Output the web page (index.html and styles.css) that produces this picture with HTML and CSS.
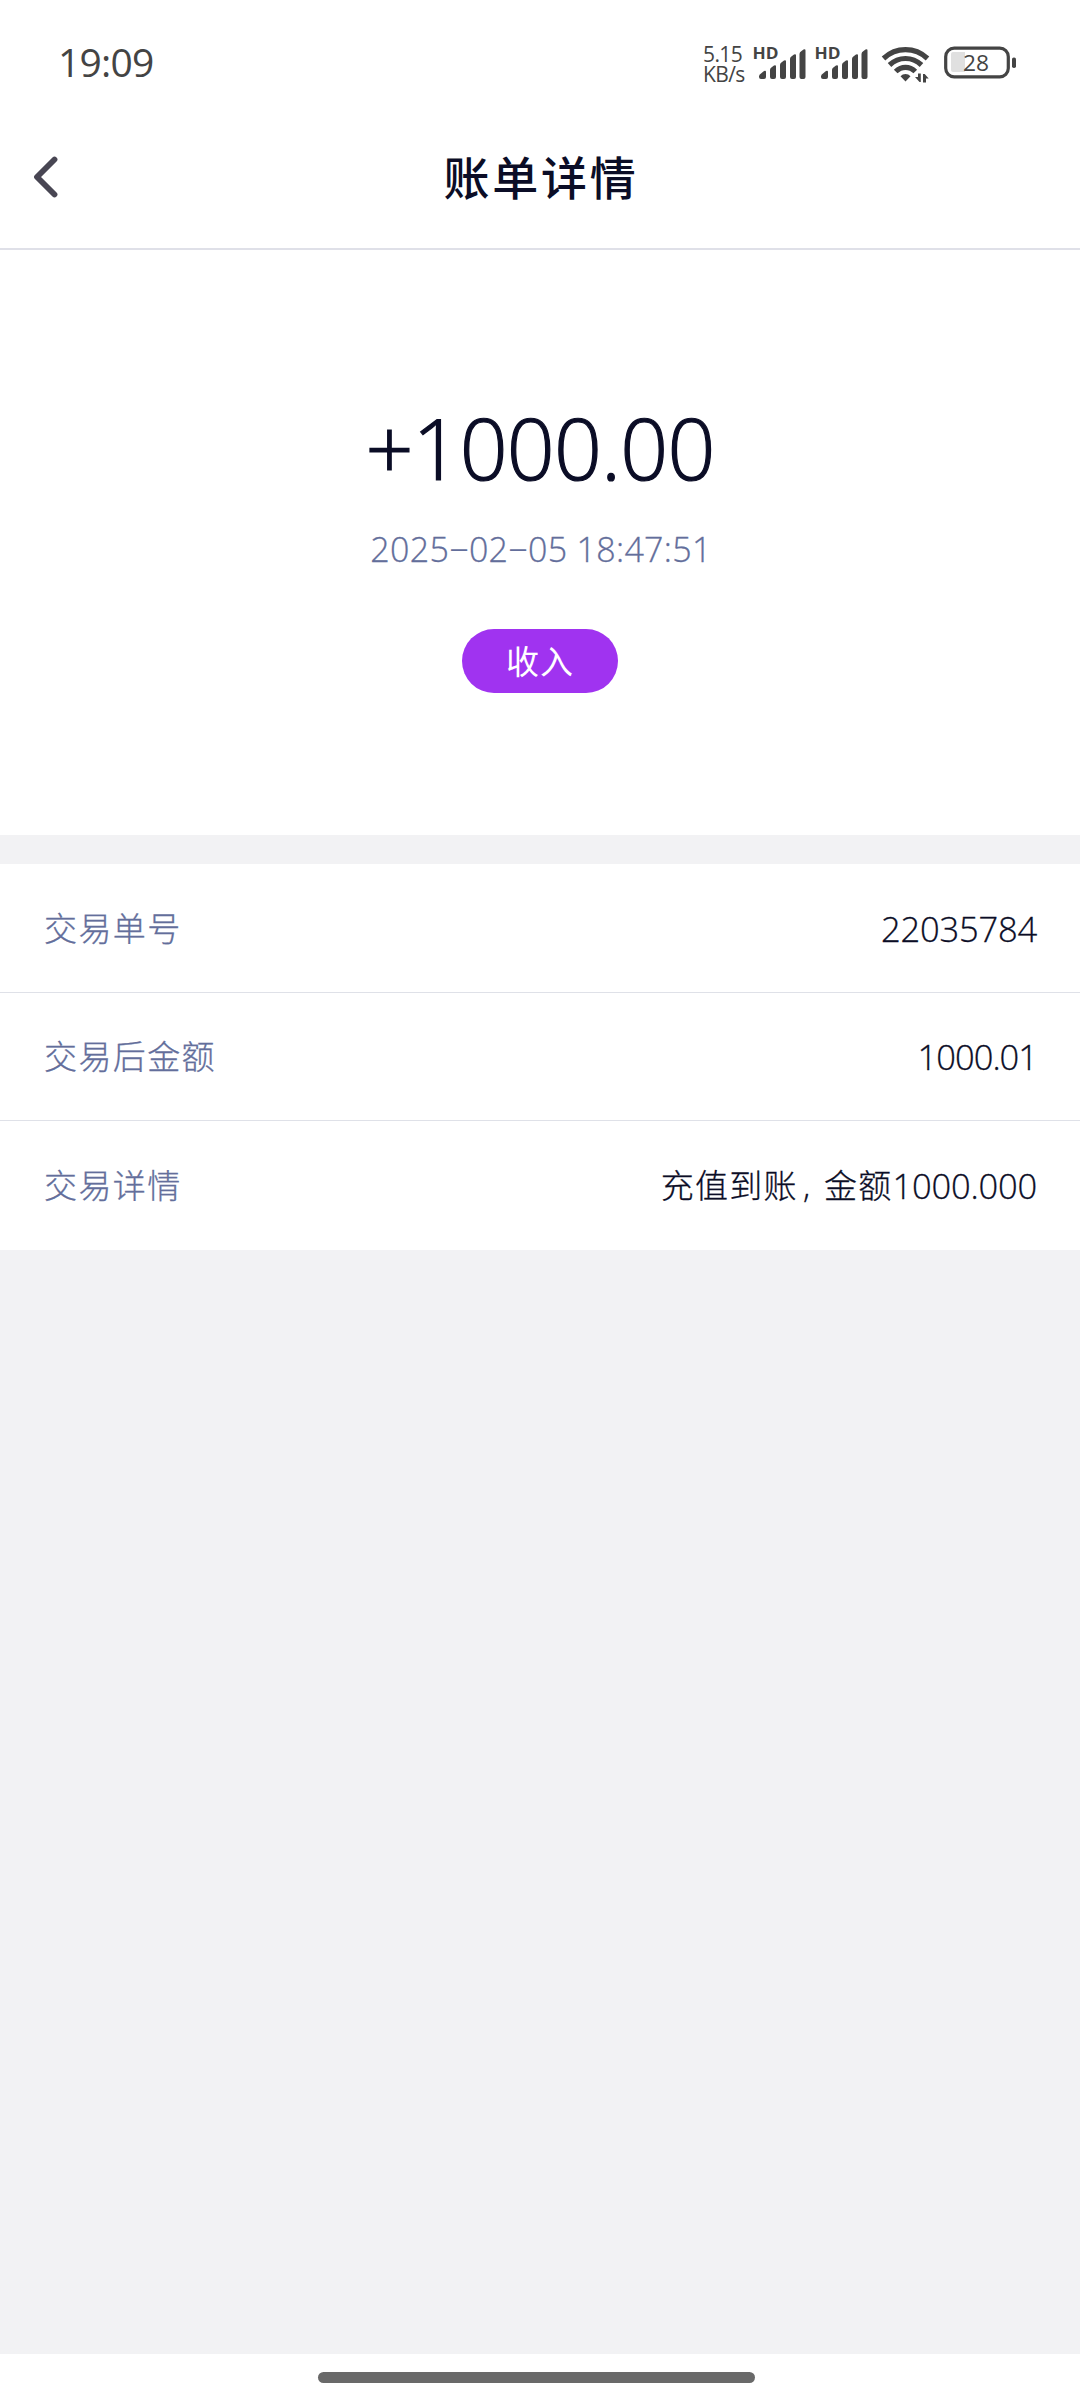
FILE: index.html
```html
<!DOCTYPE html>
<html lang="zh-CN">
<head>
<meta charset="utf-8">
<title>账单详情</title>
<link rel="stylesheet" href="styles.css">
</head>
<body>
<div class="screen">
  <div class="status">
    <span class="clock">19:09</span>
    <div class="indicators">
      <div class="speed"><span class="rate">5.15</span><span class="unit">KB/s</span></div>
      <svg class="signal" width="56" height="36" viewBox="-2 0 56 36"><text x="-1.500" y="12.500" class="hd" textLength="26" lengthAdjust="spacingAndGlyphs">HD</text><path d="M5 30.500q0-2 2-3l3-2.500q2-1 2 1v5q0 2-2 2h-3q-2 0-2-2zM16 24q0-2 2-3l2-1.500q2-1 2 1V31q0 2-2 2h-2q-2 0-2-2zM26 19q0-2 2-3l2-1.500q2-1 2 1V31q0 2-2 2h-2q-2 0-2-2zM36 13q0-2 2-3l2-1.500q2-1 2 1V31q0 2-2 2h-2q-2 0-2-2zM45.500 8q0-2 2-3l2-1.500q2-1 2 1V31q0 2-2 2h-2q-2 0-2-2z"/></svg>
      <svg class="signal second" width="56" height="36" viewBox="-2 0 56 36"><text x="-1.500" y="12.500" class="hd" textLength="26" lengthAdjust="spacingAndGlyphs">HD</text><path d="M5 30.500q0-2 2-3l3-2.500q2-1 2 1v5q0 2-2 2h-3q-2 0-2-2zM16 24q0-2 2-3l2-1.500q2-1 2 1V31q0 2-2 2h-2q-2 0-2-2zM26 19q0-2 2-3l2-1.500q2-1 2 1V31q0 2-2 2h-2q-2 0-2-2zM36 13q0-2 2-3l2-1.500q2-1 2 1V31q0 2-2 2h-2q-2 0-2-2zM45.500 8q0-2 2-3l2-1.500q2-1 2 1V31q0 2-2 2h-2q-2 0-2-2z"/></svg>
      <svg class="wifi" width="50" height="38" viewBox="0 0 50 38"><g fill="none" stroke="#444" stroke-width="5.200"><path d="M2.500 12.500Q12 3.700 24.500 3.700T46.500 12.500"/><path d="M8.500 19Q15.500 12.500 24.500 12.500T40.500 19"/><path d="M14.700 25.500Q19 21.300 24.500 21.300T34.300 25.500"/></g><path d="M24.500 28q3 0 5 2.300L24.500 35.500l-5-5.200q2-2.300 5-2.300zM37 27.500h2.800V36h-1.300L34 31h3zM42 28h1.700l4 4.500H45V36.500h-3z"/></svg>
      <svg class="battery" width="74" height="34" viewBox="0 0 74 34"><rect x="1.700" y="2.200" width="62.600" height="28.600" rx="8.500" fill="none" stroke="#444" stroke-width="3.200"/><path d="M9 6h12v20H9q-2 0-2-2V8q0-2 2-2z" class="charge"/><rect x="68" y="11.500" width="4" height="10.500" rx="1.800"/><text x="32" y="25" text-anchor="middle" class="level" textLength="26" lengthAdjust="spacingAndGlyphs">28</text></svg>
    </div>
  </div>
  <header class="header">
    <svg class="back" width="26" height="44" viewBox="0 0 26 44"><path d="M21.500 4.500L4 22l17.500 17.500" fill="none" stroke="#484653" stroke-width="5.800" stroke-linecap="round" stroke-linejoin="round"/></svg>
    <h1 class="title">账单详情</h1>
  </header>
  <section class="summary">
    <div class="amount">+1000.00</div>
    <div class="time">2025−02−05 18:47:51</div>
    <div class="tag">收入</div>
  </section>
  <dl class="details">
    <div class="row"><dt>交易单号</dt><dd class="num">22035784</dd></div>
    <div class="row"><dt>交易后金额</dt><dd class="num tight">1000.01</dd></div>
    <div class="row"><dt>交易详情</dt><dd><span class="desc">充值到账<span class="comma">,</span>金额</span><span class="num">1000.000</span></dd></div>
  </dl>
  <footer class="navbar"><div class="handle"></div></footer>
</div>
</body>
</html>
```
FILE: styles.css
```css
* { box-sizing: border-box; }
body { margin: 0; background: #f2f2f4; font-family: "Open Sans", "Noto Sans CJK SC", sans-serif; font-weight: 300; color: #0b0d26; }
.screen { width: 1080px; height: 2400px; display: flex; flex-direction: column; }
.status { height: 110px; flex: none; background: #fff; display: flex; justify-content: space-between; padding: 0 62px 0 58px; color: #444; }
.clock { font-size: 39px; font-weight: 400; line-height: 54px; margin-top: 35px; letter-spacing: -0.8px; }
.indicators { display: flex; align-items: flex-start; padding-top: 46px; }
.indicators svg { display: block; flex: none; fill: #444; overflow: visible; }
.speed { width: 49px; display: flex; flex-direction: column; font-size: 21px; line-height: 20px; font-weight: 400; margin-top: -2px; }
.rate, .unit { letter-spacing: -0.6px; }
.hd { font: 700 15.500px "Open Sans", sans-serif; }
.signal.second { margin-left: 6px; }
.wifi { margin-left: 11px; }
.battery { margin-left: 13px; }
.battery .charge { fill: #e0e0e0; }
.level { font: 400 22.500px "Open Sans", sans-serif; }
.header { height: 140px; flex: none; background: #fff; border-bottom: 2px solid #dfe0e8; display: grid; grid-template-columns: 100px 1fr 100px; }
.back { margin: 45px 0 0 33px; }
.title { margin: 0; padding-left: 2px; text-align: center; font-size: 46px; line-height: 134px; font-weight: 500; letter-spacing: 2.700px; }
.summary { height: 585px; flex: none; background: #fff; display: flex; flex-direction: column; align-items: center; padding-top: 142px; }
.amount { font-size: 84px; line-height: 112px; letter-spacing: -0.800px; -webkit-text-stroke: 1.200px #0b0d26; }
.time { margin-top: 20px; padding-left: 2px; font-size: 34px; line-height: 50px; letter-spacing: 0.300px; color: #636e9b; -webkit-text-stroke: 0.300px #636e9b; }
.tag { margin-top: 55px; width: 156px; height: 64px; border-radius: 32px; background: #a033f0; color: #fff; font-size: 33px; line-height: 65px; text-align: center; font-weight: 400; letter-spacing: 1px; }
.details { margin: 29px 0 0; flex: none; background: #fff; }
.row { height: 128.500px; display: flex; justify-content: space-between; align-items: center; padding: 2px 43px 0 44px; border-bottom: 1px solid #dfe1e8; font-size: 33px; line-height: 50px; }
.row:last-child { border-bottom: 0; }
.row dt { color: #636e9b; letter-spacing: 1.400px; -webkit-text-stroke: 0.300px #636e9b; }
.row dd { margin: 0; display: flex; -webkit-text-stroke: 0.300px #0b0d26; }
.desc { letter-spacing: 1.300px; }
.comma { display: inline-block; width: 26px; padding-left: 5px; }
.num { font-size: 34.500px; letter-spacing: -0.200px; }
.num.tight { letter-spacing: -1px; }
.navbar { margin-top: auto; height: 46px; background: #fff; display: flex; justify-content: center; padding: 18px 7px 0 0; }
.handle { width: 437px; height: 11px; border-radius: 6px; background: #696969; }
```
